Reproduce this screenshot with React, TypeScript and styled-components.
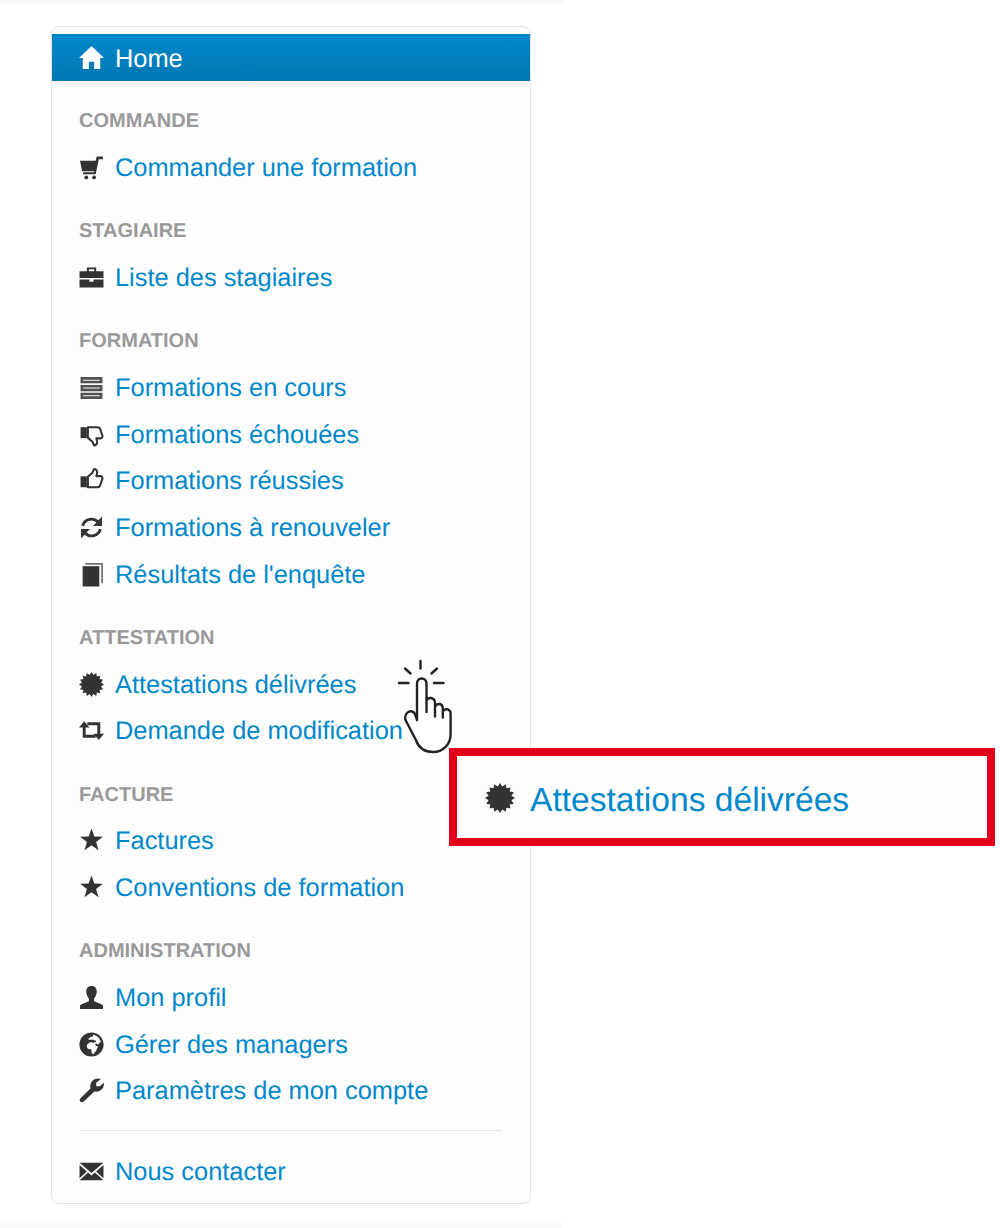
import React from 'react';
import styled, { createGlobalStyle } from 'styled-components';
import { FaGlobeAfrica } from 'react-icons/fa';

const GlobalStyle = createGlobalStyle`
  html, body {
    margin: 0;
    padding: 0;
    background: #fff;
    font-family: "Liberation Sans", Arial, sans-serif;
    text-rendering: geometricPrecision;
  }
`;

const starPoints = (spikes: number, outer: number, inner: number) => {
  const pts: string[] = [];
  for (let i = 0; i < spikes * 2; i++) {
    const r = i % 2 === 0 ? outer : inner;
    const a = (Math.PI * i) / spikes - Math.PI / 2;
    pts.push(`${(12 + r * Math.cos(a)).toFixed(2)},${(12 + r * Math.sin(a)).toFixed(2)}`);
  }
  return pts.join(' ');
};

const Svg: React.FC<{ children: React.ReactNode }> = ({ children }) => (
  <svg viewBox="0 0 24 24" fill="currentColor" aria-hidden="true">
    {children}
  </svg>
);

const HomeIcon = () => (
  <Svg>
    <path d="M12 1 24 12.500h-3.600V23h-5.900v-7h-5v7H3.600V12.500H0z" />
  </Svg>
);

const CartIcon = () => (
  <Svg>
    <path d="M1 5.500h16l-1.500 10H3z" />
    <path d="M16 5.500 17 1.500h6V4h-4l-3 14.500H4v-2h10.500z" />
    <circle cx="7" cy="21.500" r="1.800" />
    <circle cx="14.500" cy="21.500" r="1.800" />
  </Svg>
);

const BriefcaseIcon = () => (
  <Svg>
    <path d="M7.500 6V2.500h9V6H23.500v6.500H.5V6zm2-1.800V6h5V4.200z" fillRule="evenodd" />
    <path d="M.5 14h9.500v2h4v-2h9.500v7.500H.5z" />
  </Svg>
);

const TasksIcon = () => (
  <Svg>
    <path
      d="M1.500 2h21v6h-21zm2.500 2.500v1h16v-1zM1.500 9.500h21v6h-21zM4 12v1h16v-1zM1.500 17h21v6h-21zM4 19.500v1h16v-1z"
      fillRule="evenodd"
      opacity="0.85"
    />
  </Svg>
);

const thumbPath =
  'M8.500 8.500 12.800 4.500l1.800-3.500c2.200 0 3.200 2 2.700 4l-.6 2.800h4c1.500 0 2.200 1.500 1.600 3l-2 6c-.5 1.200-1.400 1.700-2.500 1.700H8.500z';

const ThumbUpIcon = () => (
  <Svg>
    <rect x="1.500" y="8" width="6" height="10.500" />
    <path d={thumbPath} fill="#fdfdfd" stroke="currentColor" strokeWidth="2" strokeLinejoin="round" />
  </Svg>
);

const ThumbDownIcon = () => (
  <Svg>
    <g transform="matrix(1 0 0 -1 0 23.500)">
      <rect x="1.500" y="8" width="6" height="10.500" />
      <path d={thumbPath} fill="#fdfdfd" stroke="currentColor" strokeWidth="2" strokeLinejoin="round" />
    </g>
  </Svg>
);

const SyncIcon = () => (
  <Svg>
    <path d="M3.500 10.500a8.700 8.700 0 0 1 15-3.500" fill="none" stroke="currentColor" strokeWidth="2.800" />
    <polygon points="22,1.500 22,10.500 13.500,10.500" />
    <path d="M20.500 13.500a8.700 8.700 0 0 1-15 3.500" fill="none" stroke="currentColor" strokeWidth="2.800" />
    <polygon points="2,22.500 2,13.500 10.500,13.500" />
  </Svg>
);

const RetweetIcon = () => (
  <Svg>
    <path d="M5 7v10.500h11M19 16.500V5.500H8" fill="none" stroke="currentColor" strokeWidth="2.800" />
    <polygon points="0,9 5,3 10,9" />
    <polygon points="14,15 19,21 24,15" />
  </Svg>
);

const BookIcon = () => (
  <Svg>
    <rect x="3.500" y="4" width="16" height="19.500" />
    <path d="M6 1h17v19.500h-1.600V2.600H6z" opacity="0.7" />
  </Svg>
);

const CertificateIcon = () => (
  <Svg>
    <polygon points={starPoints(16, 12, 9.300)} />
  </Svg>
);

const StarIcon = () => (
  <Svg>
    <polygon points={starPoints(5, 11.500, 4.600)} />
  </Svg>
);

const UserIcon = () => (
  <Svg>
    <path d="M12 1c3.500 0 5.300 2.500 5 6-.2 2.500-1.200 4.500-2.500 6v2.500c2 1.200 6 1.800 8.500 4V23H1v-3.500c2.500-2.200 6.500-2.800 8.500-4V13C8.200 11.500 7.200 9.500 7 7c-.3-3.500 1.500-6 5-6z" />
  </Svg>
);

const WrenchIcon = () => (
  <Svg>
    <path d="M1.500 19.500 11 10C10 5.500 13 .5 18 .5c1 0 2 .2 3 .5l-4.500 3.500V8H20l3.800-3.500c.8 5-3 9.500-9 8.500L4.500 22.500c-1 1-2.300 1-3.200 0-.9-.9-.8-2.100.2-3z" />
  </Svg>
);

const MailIcon = () => (
  <Svg>
    <path d="M.5 3.500h23L12 13.500z" />
    <path d="M.5 5.800 7.500 12 .5 18.500zM23.500 5.800 16.500 12l7 6.500zM8.700 13 12 15.800 15.300 13l8.200 7.500H.5z" />
  </Svg>
);

type Item = { icon: React.ReactNode; label: string };
type Group = { title: string; items: Item[] };

const groups: Group[] = [
  { title: 'COMMANDE', items: [{ icon: <CartIcon />, label: 'Commander une formation' }] },
  { title: 'STAGIAIRE', items: [{ icon: <BriefcaseIcon />, label: 'Liste des stagiaires' }] },
  {
    title: 'FORMATION',
    items: [
      { icon: <TasksIcon />, label: 'Formations en cours' },
      { icon: <ThumbDownIcon />, label: 'Formations échouées' },
      { icon: <ThumbUpIcon />, label: 'Formations réussies' },
      { icon: <SyncIcon />, label: 'Formations à renouveler' },
      { icon: <BookIcon />, label: "Résultats de l'enquête" },
    ],
  },
  {
    title: 'ATTESTATION',
    items: [
      { icon: <CertificateIcon />, label: 'Attestations délivrées' },
      { icon: <RetweetIcon />, label: 'Demande de modification' },
    ],
  },
  {
    title: 'FACTURE',
    items: [
      { icon: <StarIcon />, label: 'Factures' },
      { icon: <StarIcon />, label: 'Conventions de formation' },
    ],
  },
  {
    title: 'ADMINISTRATION',
    items: [
      { icon: <UserIcon />, label: 'Mon profil' },
      { icon: <FaGlobeAfrica />, label: 'Gérer des managers' },
      { icon: <WrenchIcon />, label: 'Paramètres de mon compte' },
    ],
  },
];

const App: React.FC = () => (
  <Page>
    <GlobalStyle />
    <TopStrip />
    <Card>
      <HomeRow>
        <IconSlot>
          <HomeIcon />
        </IconSlot>
        Home
      </HomeRow>
      {groups.map((group) => (
        <section key={group.title}>
          <Heading>{group.title}</Heading>
          {group.items.map((item) => (
            <Row key={item.label}>
              <IconSlot>{item.icon}</IconSlot>
              <a>{item.label}</a>
            </Row>
          ))}
        </section>
      ))}
      <Divider />
      <Row>
        <IconSlot>
          <MailIcon />
        </IconSlot>
        <a>Nous contacter</a>
      </Row>
    </Card>
    <BottomFade />
    <Pointer viewBox="0 0 62 98" fill="none" stroke="#222" strokeWidth="2.4" strokeLinecap="round" strokeLinejoin="round">
      <path d="M25.500 3v7.500M10 10.500l5.500 5M42 10.500l-5.500 5M4 25h9.500M39 25h9.500" />
      <path
        fill="#fff"
        d="M22 62V25.500c0-3 2-5 4.700-5s4.800 2 4.800 5V54 42.500c1-1.800 2.600-2.800 4.500-2.500 2.500.4 4 2.500 4 5v13.500-9.500c.8-2 2.200-3 4-3 2.300 0 3.700 2 3.800 4.500v9-6c.8-1.500 2.200-2.300 3.800-2.200 2.400.2 4 2 4 4.500V76c0 11-8 18-17.700 18-8 0-14-3.500-17-12L10.500 62c-.8-3 .3-6.500 2.800-8 2.800-1.500 5.500-.5 6.700 2z"
      />
    </Pointer>
    <Callout>
      <CalloutIcon>
        <CertificateIcon />
      </CalloutIcon>
      <CalloutText>Attestations délivrées</CalloutText>
    </Callout>
  </Page>
);

const Page = styled.div`
  position: relative;
  width: 1000px;
  height: 1228px;
  overflow: hidden;
  display: flex;
  flex-direction: column;
`;

const TopStrip = styled.div`
  width: 563px;
  height: 4px;
  background: #fafafa;
`;

const BottomFade = styled.div`
  margin-top: auto;
  width: 563px;
  height: 10px;
  background: linear-gradient(#fff, #fafafa);
`;

const Card = styled.div`
  width: 480px;
  box-sizing: border-box;
  margin: 22px 0 0 51px;
  padding: 7px 0 8px;
  background: #fdfdfd;
  border: 1px solid #e3e3e3;
  border-radius: 8px;
`;

const IconSlot = styled.span`
  display: inline-flex;
  flex: none;
  width: 25px;
  height: 25px;
  margin-right: 11px;
  color: #333;
  filter: blur(0.3px);

  svg {
    width: 100%;
    height: 100%;
  }
`;

const Row = styled.div`
  display: flex;
  align-items: center;
  box-sizing: border-box;
  height: 46.75px;
  padding-left: 27px;
  padding-top: 2px;
  font-size: 25.4px;
  color: #0088cc;
  white-space: nowrap;

  ${IconSlot} {
    margin-top: -2px;
  }
`;

const HomeRow = styled(Row)`
  height: 47px;
  padding-top: 3px;
  color: #fff;
  background: linear-gradient(#0088cc, #0077b3);

  ${IconSlot} {
    color: #fff;
    margin-top: -3px;
  }
`;

const Heading = styled.div`
  display: flex;
  align-items: center;
  box-sizing: border-box;
  height: 46.75px;
  margin-top: 16.4px;
  padding-left: 27px;
  padding-top: 2px;
  font-size: 20px;
  font-weight: 700;
  color: #999;
`;

const Divider = styled.div`
  height: 1px;
  margin: 16px 28px 16.500px;
  background: #e5e5e5;
`;

const Pointer = styled.svg`
  position: absolute;
  left: 395px;
  top: 658px;
  width: 62px;
  height: 98px;
`;

const Callout = styled.div`
  position: absolute;
  left: 449px;
  top: 748px;
  width: 546px;
  height: 98px;
  box-sizing: border-box;
  display: flex;
  align-items: center;
  padding-left: 28px;
  background: #fdfdfd;
  border: 8px solid #e2001a;
`;

const CalloutIcon = styled.span`
  display: inline-flex;
  width: 30px;
  height: 30px;
  margin-top: 2px;
  margin-right: 15px;
  color: #333;
  filter: blur(0.4px);

  svg {
    width: 100%;
    height: 100%;
  }
`;

const CalloutText = styled.span`
  padding-top: 8px;
  font-size: 33.600px;
  color: #0088cc;
  white-space: nowrap;
`;

export default App;
